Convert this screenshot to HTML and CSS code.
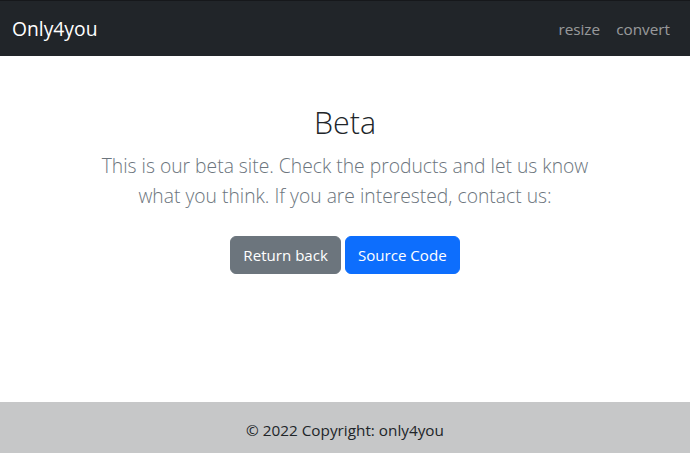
FILE: index.html
```html
<!DOCTYPE html>
<html lang="en">
<head>
<meta charset="utf-8">
<title>Only4you</title>
<link rel="stylesheet" href="styles.css">
</head>
<body>
<nav class="navbar">
  <a class="brand" href="#">Only4you</a>
  <ul class="nav">
    <li><a class="nav-link" href="#">resize</a></li>
    <li><a class="nav-link" href="#">convert</a></li>
  </ul>
</nav>
<main class="hero">
  <h1 class="title">Beta</h1>
  <div class="lead-wrap">
    <p class="lead">This is our beta site. Check the products and let us know what you think. If you are interested, contact us:</p>
    <div class="actions">
      <a class="btn btn-secondary" href="#">Return back</a>
      <a class="btn btn-primary" href="#">Source Code</a>
    </div>
  </div>
</main>
<footer class="footer">
  <div class="copyright">© 2022 Copyright: only4you</div>
</footer>
</body>
</html>
```
FILE: styles.css
```css
html, body {
  margin: 0;
  padding: 0;
}
body {
  font-family: "Open Sans", "Noto Sans", sans-serif;
  font-size: 16px;
  line-height: 1.5;
  color: #212529;
  background: #fff;
  min-height: 100vh;
  display: flex;
  flex-direction: column;
}
a { text-decoration: none; }

.navbar {
  background: #212529;
  height: 56px;
  box-sizing: border-box;
  padding: 8px 12px;
  display: flex;
  align-items: center;
  justify-content: space-between;
  border-top: 1px solid #16181b;
}
.brand {
  color: #fff;
  font-size: 19.3px;
  line-height: 30px;
  padding: 5px 0;
}
.nav {
  list-style: none;
  margin: 0;
  padding: 0;
  display: flex;
}
.nav-link {
  display: block;
  padding: 8px 8px;
  color: rgba(255,255,255,.55);
  font-size: 15.3px;
  line-height: 24px;
}

.hero {
  padding: 48px 12px 0;
  text-align: center;
}
.title {
  margin: 0 0 8px;
  font-size: 30.4px;
  font-weight: 300;
  line-height: 38.8px;
  color: #212529;
}
.lead-wrap {
  width: 516px;
  margin: 0 auto;
}
.lead {
  font-size: 19.3px;
  line-height: 30px;
  font-weight: 300;
  color: #6c757d;
  margin: 0 0 25px;
}
.actions {
  display: flex;
  justify-content: center;
  gap: 4px;
}
.btn {
  display: inline-block;
  font-size: 15.1px;
  line-height: 24px;
  padding: 6px 12px;
  border: 1px solid transparent;
  border-radius: 6px;
  color: #fff;
}
.btn-secondary { background: #6c757d; border-color: #6c757d; }
.btn-primary { background: #0d6efd; border-color: #0d6efd; }

.footer {
  margin-top: auto;
  background: #f8f9fa;
}
.copyright {
  background: rgba(0,0,0,.2);
  padding: 19px 16px 13px;
  text-align: center;
  font-size: 15.3px;
  line-height: 19.2px;
  color: #212529;
}
```
